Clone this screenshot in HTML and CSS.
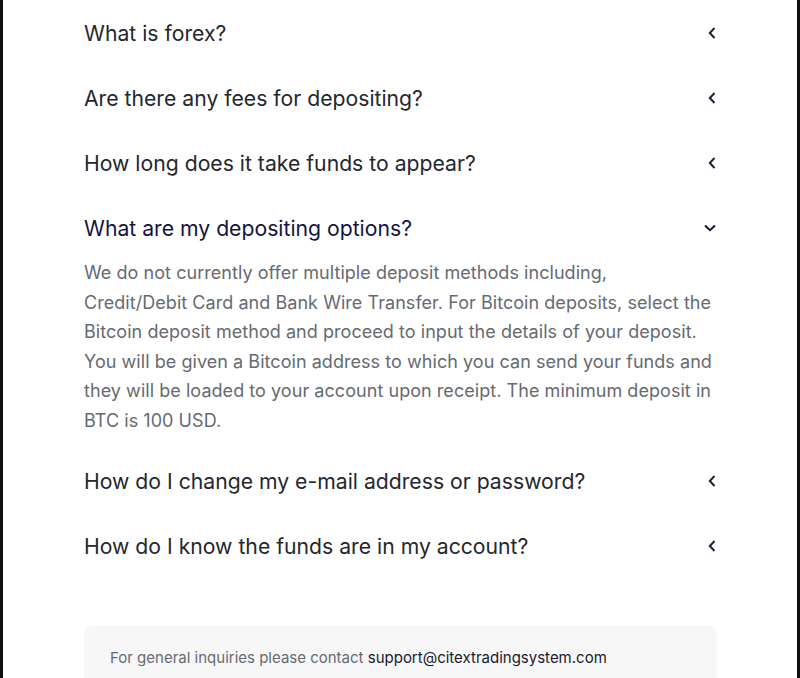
FILE: index.html
```html
<!DOCTYPE html>
<html>
<head>
<meta charset="utf-8">
<link rel="stylesheet" href="styles.css">
</head>
<body>
<div class="page">
  <div class="container">
    <div class="faq">
      <div class="item">
        <div class="q"><span class="q-text">What is forex?</span><svg class="chev" viewBox="0 0 8 12"><path d="M6.5 1L1.8 6l4.7 5"/></svg></div>
      </div>
      <div class="item">
        <div class="q"><span class="q-text">Are there any fees for depositing?</span><svg class="chev" viewBox="0 0 8 12"><path d="M6.5 1L1.8 6l4.7 5"/></svg></div>
      </div>
      <div class="item">
        <div class="q"><span class="q-text">How long does it take funds to appear?</span><svg class="chev" viewBox="0 0 8 12"><path d="M6.5 1L1.8 6l4.7 5"/></svg></div>
      </div>
      <div class="item open">
        <div class="q"><span class="q-text">What are my depositing options?</span><svg class="chev down" viewBox="0 0 12 8"><path d="M1 1.5L6 6.2l5-4.7"/></svg></div>
        <p class="a">We do not currently offer multiple deposit methods including, Credit/Debit Card and Bank Wire Transfer. For Bitcoin deposits, select the Bitcoin deposit method and proceed to input the details of your deposit. You will be given a Bitcoin address to which you can send your funds and they will be loaded to your account upon receipt. The minimum deposit in BTC is 100 USD.</p>
      </div>
      <div class="item">
        <div class="q"><span class="q-text">How do I change my e-mail address or password?</span><svg class="chev" viewBox="0 0 8 12"><path d="M6.5 1L1.8 6l4.7 5"/></svg></div>
      </div>
      <div class="item">
        <div class="q"><span class="q-text">How do I know the funds are in my account?</span><svg class="chev" viewBox="0 0 8 12"><path d="M6.5 1L1.8 6l4.7 5"/></svg></div>
      </div>
    </div>
    <div class="contact">For general inquiries please contact <span class="mail">support@citextradingsystem.com</span></div>
  </div>
</div>
</body>
</html>
```
FILE: styles.css
```css
html, body {
  margin: 0;
  padding: 0;
  background: #fff;
}
body {
  font-family: "Inter", "Noto Sans", sans-serif;
}
.page {
  min-height: 678px;
  border-left: 3px solid #111;
  border-right: 3px solid #111;
  box-sizing: border-box;
}
.container {
  width: 633px;
  margin: 0 auto;
  padding-left: 1px;
}
.q {
  display: flex;
  align-items: center;
  justify-content: space-between;
  padding: 20px 0 19px;
  height: 26px;
}
.q-text {
  font-size: 21.2px;
  line-height: 26px;
  color: #25272e;
}
.open .q-text {
  color: #121442;
}
.chev {
  width: 8px;
  height: 12px;
  margin-right: 1px;
  fill: none;
  stroke: #1d2236;
  stroke-width: 2;
}
.chev.down {
  width: 12px;
  height: 8px;
  margin-right: 1px;
  stroke: #121442;
}
.a {
  margin: -2px 0 0;
  padding: 0 5px 13px 0;
  font-size: 18px;
  letter-spacing: 0.05px;
  line-height: 29.5px;
  color: #666a72;
}
.contact {
  margin-top: 48px;
  background: #f7f7f7;
  border-radius: 7px 7px 0 0;
  padding: 24px 26px 20px;
  font-size: 15px;
  line-height: 16px;
  color: #666a72;
  height: 40px;
}
.mail {
  color: #1a1a2e;
}
```
